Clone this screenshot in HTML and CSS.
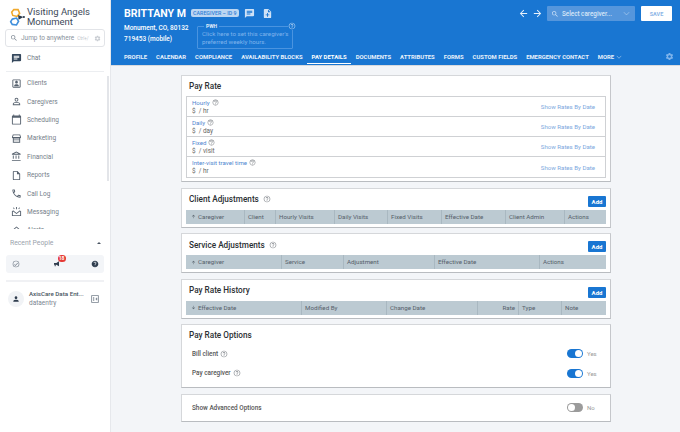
FILE: index.html
```html
<!DOCTYPE html>
<html lang="en">
<head>
  <meta charset="UTF-8" />
  <title>Caregiver Pay Details</title>
  <link rel="stylesheet" href="styles.css">
</head>
<body>
  <svg class="icon-defs" xmlns="http://www.w3.org/2000/svg">
    <symbol id="i-help" viewBox="0 0 24 24"><path d="M11 18h2v-2h-2v2zm1-16C6.48 2 2 6.48 2 12s4.48 10 10 10 10-4.48 10-10S17.52 2 12 2zm0 18c-4.41 0-8-3.59-8-8s3.59-8 8-8 8 3.59 8 8-3.59 8-8 8zm0-14c-2.21 0-4 1.79-4 4h2c0-1.1.9-2 2-2s2 .9 2 2c0 2-3 1.75-3 5h2c0-2.25 3-2.5 3-5 0-2.21-1.79-4-4-4z"/></symbol>
    <symbol id="i-chat" viewBox="0 0 24 24"><path d="M20 2H4c-1.1 0-2 .9-2 2v18l4-4h14c1.1 0 2-.9 2-2V4c0-1.1-.9-2-2-2zM6 9h12v2H6V9zm8 5H6v-2h8v2zm4-6H6V6h12v2z"/></symbol>
    <symbol id="i-note" viewBox="0 0 24 24"><path d="M14 2H6c-1.1 0-1.99.9-1.99 2L4 20c0 1.1.89 2 1.99 2H18c1.1 0 2-.9 2-2V8l-6-6zm2 14h-3v3h-2v-3H8v-2h3v-3h2v3h3v2zm-3-7V3.5L18.5 9H13z"/></symbol>
    <symbol id="i-client" viewBox="0 0 24 24"><path d="M3 5v14c0 1.1.89 2 2 2h14c1.1 0 2-.9 2-2V5c0-1.1-.9-2-2-2H5c-1.11 0-2 .9-2 2zm2 0h14v14H5V5zm10 4c0 1.66-1.34 3-3 3S9 10.66 9 9s1.34-3 3-3 3 1.34 3 3zm-8 7.5c0-1.7 3.3-2.6 5-2.6s5 .9 5 2.6V18H7v-1.5z"/></symbol>
    <symbol id="i-person-line" viewBox="0 0 24 24"><path d="M12 5.9c1.16 0 2.1.94 2.1 2.1s-.94 2.1-2.1 2.1S9.9 9.16 9.9 8s.94-2.1 2.1-2.1m0 9c2.97 0 6.1 1.46 6.1 2.1v1.1H5.9V17c0-.64 3.13-2.1 6.1-2.1M12 4C9.79 4 8 5.79 8 8s1.79 4 4 4 4-1.79 4-4-1.79-4-4-4zm0 9c-2.67 0-8 1.34-8 4v3h16v-3c0-2.66-5.33-4-8-4z"/></symbol>
    <symbol id="i-calendar" viewBox="0 0 24 24"><path d="M20 3h-1V1h-2v2H7V1H5v2H4c-1.1 0-2 .9-2 2v16c0 1.1.9 2 2 2h16c1.1 0 2-.9 2-2V5c0-1.1-.9-2-2-2zm0 18H4V8h16v13z"/></symbol>
    <symbol id="i-store" viewBox="0 0 24 24"><path d="M4 3h16l2 6c0 1.3-.8 2.3-2 2.7V21H4v-9.3C2.8 11.3 2 10.3 2 9l2-6zm1.5 2L4.2 8.8h15.6L18.5 5h-13zM6 12v2h12v-2H6zm0 4v3h12v-3H6z"/></symbol>
    <symbol id="i-bank" viewBox="0 0 24 24"><path d="M4 10h2v7H4v-7zm6 0h2v7h-2v-7zM2 20h19v2H2v-2zm14-10h2v7h-2v-7zM11.5 1 2 6v2h19V6l-9.5-5zm0 2.300L16.500 6h-10l5-2.700z"/></symbol>
    <symbol id="i-doc" viewBox="0 0 24 24"><path d="M14 2H6c-1.1 0-1.99.9-1.99 2L4 20c0 1.1.89 2 1.99 2H18c1.1 0 2-.9 2-2V8l-6-6zm4 18H6V4h7v5h5v11z"/></symbol>
    <symbol id="i-phone" viewBox="0 0 24 24"><path d="M6.54 5c.06.89.21 1.76.45 2.59l-1.2 1.2c-.41-1.2-.67-2.47-.76-3.79h1.51m9.86 12.02c.85.24 1.72.39 2.6.45v1.49c-1.32-.09-2.59-.35-3.8-.75l1.2-1.19M7.5 3H4c-.55 0-1 .45-1 1 0 9.39 7.61 17 17 17 .55 0 1-.45 1-1v-3.49c0-.55-.45-1-1-1-1.24 0-2.45-.2-3.57-.57-.1-.04-.21-.05-.31-.05-.26 0-.51.1-.71.29l-2.2 2.2c-2.83-1.45-5.15-3.76-6.59-6.59l2.2-2.2c.28-.28.36-.67.25-1.02C8.7 6.45 8.5 5.25 8.5 4c0-.55-.45-1-1-1z"/></symbol>
    <symbol id="i-message" viewBox="0 0 24 24"><path d="M2 11h2v9h16v-9h2v11H2V11zm2.5-1.500L12 15l7.500-5.500 1.200 1.600L12 17.500 3.300 11.100l1.200-1.600zM6 3l2 3-1.600 1-2-3L6 3zm12 0 1.600 1-2 3L16 6l2-3zM11 2h2v5h-2V2z"/></symbol>
    <symbol id="i-alert" viewBox="0 0 24 24"><path d="M12 3 2 12h3v9h5v-6h4v6h5v-9h3L12 3zm0 2.700 5 4.500V19h-1v-6H8v6H7v-8.800l5-4.500z"/></symbol>
    <symbol id="i-search" viewBox="0 0 24 24"><path d="M15.5 14h-.79l-.28-.27C15.41 12.59 16 11.11 16 9.5 16 5.91 13.09 3 9.5 3S3 5.91 3 9.5 5.91 16 9.5 16c1.61 0 3.09-.59 4.23-1.57l.27.28v.79l5 4.99L20.49 19l-4.99-5zm-6 0C7.01 14 5 11.99 5 9.5S7.01 5 9.5 5 14 7.01 14 9.5 11.99 14 9.5 14z"/></symbol>
    <symbol id="i-gear" viewBox="0 0 24 24"><path d="M19.14 12.94c.04-.3.06-.61.06-.94 0-.32-.02-.64-.07-.94l2.03-1.58c.18-.14.23-.41.12-.61l-1.92-3.32c-.12-.22-.37-.29-.59-.22l-2.39.96c-.5-.38-1.03-.7-1.62-.94l-.36-2.54c-.04-.24-.24-.41-.48-.41h-3.84c-.24 0-.43.17-.47.41l-.36 2.54c-.59.24-1.13.57-1.62.94l-2.39-.96c-.22-.08-.47 0-.59.22L2.74 8.87c-.12.21-.08.47.12.61l2.03 1.58c-.05.3-.09.63-.09.94s.02.64.07.94l-2.03 1.58c-.18.14-.23.41-.12.61l1.92 3.32c.12.22.37.29.59.22l2.39-.96c.5.38 1.03.7 1.62.94l.36 2.54c.05.24.24.41.48.41h3.84c.24 0 .44-.17.47-.41l.36-2.54c.59-.24 1.13-.56 1.62-.94l2.39.96c.22.08.47 0 .59-.22l1.92-3.32c.12-.22.07-.47-.12-.61l-2.01-1.58zM12 15.6c-1.98 0-3.6-1.62-3.6-3.6s1.62-3.6 3.6-3.6 3.6 1.62 3.6 3.6-1.62 3.6-3.6 3.6z"/></symbol>
    <symbol id="i-back" viewBox="0 0 24 24"><path d="M20 11H7.83l5.59-5.59L12 4l-8 8 8 8 1.41-1.41L7.83 13H20v-2z"/></symbol>
    <symbol id="i-forward" viewBox="0 0 24 24"><path d="M12 4l-1.41 1.41L16.17 11H4v2h12.17l-5.58 5.59L12 20l8-8z"/></symbol>
    <symbol id="i-chevron" viewBox="0 0 24 24"><path d="M3 7.5 12 17l9-9.500" fill="none" stroke="currentColor" stroke-width="2"/></symbol>
    <symbol id="i-up" viewBox="0 0 24 24"><path d="M4 12l1.410 1.410L11 7.830V20h2V7.830l5.580 5.590L20 12l-8-8-8 8z"/></symbol>
    <symbol id="i-down" viewBox="0 0 24 24"><path d="M20 12l-1.410-1.410L13 16.170V4h-2v12.170l-5.580-5.590L4 12l8 8 8-8z"/></symbol>
    <symbol id="i-check" viewBox="0 0 24 24"><path d="M12 2a10 10 0 1 0 0 20 10 10 0 0 0 0-20zm0 18a8 8 0 1 1 0-16 8 8 0 0 1 0 16zm4.600-11.600L10 15l-2.600-2.600L6 13.800l4 4 8-8-1.400-1.400z"/></symbol>
    <symbol id="i-horn" viewBox="0 0 24 24"><path d="M3 9h7l8-5v15l-8-5H8v5H5v-5H3V9z"/></symbol>
    <symbol id="i-help-fill" viewBox="0 0 24 24"><path d="M12 2C6.48 2 2 6.48 2 12s4.48 10 10 10 10-4.48 10-10S17.52 2 12 2zm1 17h-2v-2h2v2zm2.07-7.750-.9.92C13.450 12.900 13 13.500 13 15h-2v-.5c0-1.100.45-2.100 1.170-2.830l1.240-1.260c.37-.36.59-.86.59-1.410 0-1.100-.9-2-2-2s-2 .9-2 2H8c0-2.210 1.790-4 4-4s4 1.790 4 4c0 .88-.36 1.680-.93 2.250z"/></symbol>
    <symbol id="i-person" viewBox="0 0 24 24"><path d="M12 12c2.210 0 4-1.790 4-4s-1.790-4-4-4-4 1.790-4 4 1.790 4 4 4zm0 2c-2.670 0-8 1.340-8 4v2h16v-2c0-2.660-5.330-4-8-4z"/></symbol>
    <symbol id="i-logout" viewBox="0 0 24 24"><path d="M3 3h18v18H3V3zm2 2v14h14V5H5zm3 2h2v10H8V7zm8.500 1.500L18 10l-2 2 2 2-1.500 1.500L13 12l3.500-3.500z"/></symbol>
  </svg>

  <div class="app">
    <!-- sidebar -->
    <aside class="sidebar">
      <div class="brand">
        <svg class="brand-logo" viewBox="0 0 30 34" xmlns="http://www.w3.org/2000/svg">
          <path d="M9 3 17 3 20 10 15 16 7 14 5 8Z" fill="none" stroke="#f0a92d" stroke-width="3"/>
          <path d="M6 21 14 19 18 25 14 32 6 31 3 26Z" fill="none" stroke="#3f8fdc" stroke-width="3"/>
          <path d="M17 13 27 17 18 22Z" fill="#2a3a4d"/>
          <circle cx="28" cy="17" r="2" fill="#2a3a4d"/>
        </svg>
        <div class="brand-name">Visiting Angels Monument</div>
      </div>
      <div class="jump">
        <svg class="jump-icon"><use href="#i-search"/></svg>
        <span class="jump-text">Jump to anywhere</span>
        <span class="jump-key">Ctrl+/</span>
        <svg class="jump-gear"><use href="#i-gear"/></svg>
      </div>
      <div class="nav-item nav-chat"><svg class="nav-icon dark"><use href="#i-chat"/></svg>Chat</div>
      <div class="nav-rule"></div>
      <nav class="nav">
        <div class="nav-item"><svg class="nav-icon"><use href="#i-client"/></svg>Clients</div>
        <div class="nav-item"><svg class="nav-icon"><use href="#i-person-line"/></svg>Caregivers</div>
        <div class="nav-item"><svg class="nav-icon"><use href="#i-calendar"/></svg>Scheduling</div>
        <div class="nav-item"><svg class="nav-icon"><use href="#i-store"/></svg>Marketing</div>
        <div class="nav-item"><svg class="nav-icon"><use href="#i-bank"/></svg>Financial</div>
        <div class="nav-item"><svg class="nav-icon"><use href="#i-doc"/></svg>Reports</div>
        <div class="nav-item"><svg class="nav-icon"><use href="#i-phone"/></svg>Call Log</div>
        <div class="nav-item"><svg class="nav-icon"><use href="#i-message"/></svg>Messaging</div>
        <div class="nav-item"><svg class="nav-icon"><use href="#i-alert"/></svg>Alerts</div>
        <div class="nav-scroll"></div>
      </nav>
      <div class="recent">
        <span>Recent People</span>
        <span class="recent-caret"></span>
      </div>
      <div class="quick">
        <svg class="quick-icon grey"><use href="#i-check"/></svg>
        <span class="quick-horn">
          <svg class="quick-icon"><use href="#i-horn"/></svg>
          <span class="quick-badge">18</span>
        </span>
        <svg class="quick-icon"><use href="#i-help-fill"/></svg>
      </div>
      <div class="side-rule"></div>
      <div class="user">
        <span class="user-avatar"><svg class="user-icon"><use href="#i-person"/></svg></span>
        <div class="user-text">
          <div class="user-name">AxisCare Data Ent...</div>
          <div class="user-login">dataentry</div>
        </div>
        <svg class="user-logout"><use href="#i-logout"/></svg>
      </div>
    </aside>

    <div class="content">
      <!-- header -->
      <header class="header">
        <div class="head-top">
          <div class="head-info">
            <div class="name-row">
              <h1 class="person-name">BRITTANY M</h1>
              <span class="role-badge">CAREGIVER – ID 9</span>
              <svg class="head-icon"><use href="#i-chat"/></svg>
              <svg class="head-icon"><use href="#i-note"/></svg>
            </div>
            <div class="detail-row">
              <div class="address">
                <div>Monument, CO, 80132</div>
                <div>719453 (mobile)</div>
              </div>
              <div class="pwh">
                <span class="pwh-label">PWH</span>
                <svg class="pwh-help"><use href="#i-help"/></svg>
                Click here to set this caregiver's preferred weekly hours.
              </div>
            </div>
          </div>
          <div class="head-actions">
            <svg class="arrow"><use href="#i-back"/></svg>
            <svg class="arrow"><use href="#i-forward"/></svg>
            <div class="picker">
              <svg class="picker-search"><use href="#i-search"/></svg>
              <span class="picker-text">Select caregiver...</span>
              <svg class="picker-chevron"><use href="#i-chevron"/></svg>
            </div>
            <button class="save-btn">SAVE</button>
          </div>
        </div>
        <div class="tabs">
          <a class="tab">Profile</a>
          <a class="tab">Calendar</a>
          <a class="tab">Compliance</a>
          <a class="tab">Availability Blocks</a>
          <a class="tab active">Pay Details</a>
          <a class="tab">Documents</a>
          <a class="tab">Attributes</a>
          <a class="tab">Forms</a>
          <a class="tab">Custom Fields</a>
          <a class="tab">Emergency Contact</a>
          <a class="tab">More <svg class="tab-chevron"><use href="#i-chevron"/></svg></a>
          <svg class="tabs-gear"><use href="#i-gear"/></svg>
        </div>
      </header>

      <!-- cards -->
      <main class="main">
        <section class="card card-rates">
          <h2 class="card-title">Pay Rate</h2>
          <div class="rates">
            <div class="rate-row">
              <div><div class="rate-name">Hourly <svg class="help"><use href="#i-help"/></svg></div><div class="rate-value">$&nbsp; / hr</div></div>
              <a class="rate-link">Show Rates By Date</a>
            </div>
            <div class="rate-row">
              <div><div class="rate-name">Daily <svg class="help"><use href="#i-help"/></svg></div><div class="rate-value">$&nbsp; / day</div></div>
              <a class="rate-link">Show Rates By Date</a>
            </div>
            <div class="rate-row">
              <div><div class="rate-name">Fixed <svg class="help"><use href="#i-help"/></svg></div><div class="rate-value">$&nbsp; / visit</div></div>
              <a class="rate-link">Show Rates By Date</a>
            </div>
            <div class="rate-row">
              <div><div class="rate-name">Inter-visit travel time <svg class="help"><use href="#i-help"/></svg></div><div class="rate-value">$&nbsp; / hr</div></div>
              <a class="rate-link">Show Rates By Date</a>
            </div>
          </div>
        </section>

        <section class="card card-table">
          <div class="table-head">
            <h2 class="card-title">Client Adjustments <svg class="title-help"><use href="#i-help"/></svg></h2>
            <button class="add-btn">Add</button>
          </div>
          <div class="grid-head cols-client">
            <span><svg class="sort"><use href="#i-up"/></svg>Caregiver</span><span>Client</span><span>Hourly Visits</span><span>Daily Visits</span><span>Fixed Visits</span><span>Effective Date</span><span>Client Admin</span><span>Actions</span>
          </div>
        </section>

        <section class="card card-table">
          <div class="table-head">
            <h2 class="card-title">Service Adjustments <svg class="title-help"><use href="#i-help"/></svg></h2>
            <button class="add-btn">Add</button>
          </div>
          <div class="grid-head cols-service">
            <span><svg class="sort"><use href="#i-up"/></svg>Caregiver</span><span>Service</span><span>Adjustment</span><span>Effective Date</span><span>Actions</span>
          </div>
        </section>

        <section class="card card-table">
          <div class="table-head">
            <h2 class="card-title">Pay Rate History</h2>
            <button class="add-btn">Add</button>
          </div>
          <div class="grid-head cols-history">
            <span><svg class="sort"><use href="#i-down"/></svg>Effective Date</span><span>Modified By</span><span>Change Date</span><span class="right">Rate</span><span>Type</span><span>Note</span>
          </div>
        </section>

        <section class="card card-options">
          <h2 class="card-title">Pay Rate Options</h2>
          <div class="option-row">
            <span class="option-label">Bill client <svg class="help"><use href="#i-help"/></svg></span>
            <span class="toggle on"></span><span class="toggle-text">Yes</span>
          </div>
          <div class="option-row">
            <span class="option-label">Pay caregiver <svg class="help"><use href="#i-help"/></svg></span>
            <span class="toggle on"></span><span class="toggle-text">Yes</span>
          </div>
        </section>

        <section class="card card-advanced">
          <div class="option-row">
            <span class="option-label">Show Advanced Options</span>
            <span class="toggle"></span><span class="toggle-text">No</span>
          </div>
        </section>
      </main>
    </div>
  </div>
</body>
</html>
```

FILE: styles.css
```css
html, body {
  margin: 0;
  padding: 0;
  height: 100%;
  overflow: hidden;
}
body {
  font-family: Roboto, "Liberation Sans", sans-serif;
  color: #333;
  background: #f3f5f8;
}
h1, h2 {
  margin: 0;
}
.icon-defs {
  display: none;
}
.app {
  display: flex;
  height: 432px;
}

/* ======================
   sidebar
   ====================== */
.sidebar {
  width: 110px;
  flex: 0 0 auto;
  background: #fff;
  border-right: 1px solid #e6e8ec;
  display: flex;
  flex-direction: column;
}
.brand {
  display: flex;
  align-items: center;
  height: 29px;
  padding: 4px 0 0 9px;
  box-sizing: border-box;
}
.brand-logo {
  width: 16px;
  height: 18px;
  margin-right: 2px;
}
.brand-name {
  font-size: 9.5px;
  line-height: 9.5px;
  width: 75px;
  color: #3e4a59;
}
.jump {
  display: flex;
  align-items: center;
  margin: 0 5px;
  height: 18px;
  border: 1px solid #e2e4e8;
  border-radius: 3px;
  box-sizing: border-box;
  padding: 0 3px 0 4px;
}
.jump-icon {
  width: 8px;
  height: 8px;
  fill: #7c8692;
  margin-right: 3px;
}
.jump-text {
  font-size: 6.5px;
  color: #8a929c;
  white-space: nowrap;
}
.jump-key {
  font-size: 4.5px;
  color: #c2c6cc;
  margin-left: 3px;
  white-space: nowrap;
}
.jump-gear {
  width: 7px;
  height: 7px;
  fill: #c8ccd2;
  margin-left: auto;
}
.nav-item {
  display: flex;
  align-items: center;
  height: 18.4px;
  padding-left: 11px;
  font-size: 6.5px;
  color: #757e89;
  flex: 0 0 auto;
}
.nav-chat {
  margin-top: 1px;
  height: 20px;
}
.nav-icon {
  width: 11px;
  height: 11px;
  fill: #56616e;
  margin-right: 5px;
  flex: 0 0 auto;
}
.nav-icon.dark {
  fill: #34475c;
}
.nav-rule {
  height: 1px;
  background: #eceef1;
  margin: 3px 6px 2px;
}
.nav {
  position: relative;
  height: 155px;
  overflow: hidden;
}
.nav-scroll {
  position: absolute;
  left: 107px;
  top: 2px;
  width: 2px;
  height: 105px;
  background: #e3e5e9;
}
.recent {
  display: flex;
  justify-content: space-between;
  align-items: center;
  padding: 8px 9px 0 10px;
  font-size: 6.8px;
  color: #9aa2ac;
  height: 19px;
  box-sizing: border-box;
}
.recent-caret {
  width: 0;
  height: 0;
  border-left: 2.5px solid transparent;
  border-right: 2.5px solid transparent;
  border-bottom: 2.5px solid #4a5562;
}
.quick {
  display: flex;
  justify-content: space-between;
  align-items: center;
  margin: 7px 6px 0;
  height: 18px;
  padding: 0 5px 0 6px;
  background: #f3f5f8;
  border-radius: 3px;
}
.quick-icon {
  width: 8px;
  height: 8px;
  fill: #2f3d4e;
  display: block;
}
.quick-icon.grey {
  fill: #77818d;
}
.quick-horn {
  position: relative;
  margin-left: 2px;
}
.quick-badge {
  position: absolute;
  left: 5px;
  top: -5px;
  width: 8px;
  height: 7px;
  border-radius: 4px;
  background: #e53935;
  color: #fff;
  font-size: 5px;
  font-weight: 700;
  line-height: 7px;
  text-align: center;
}
.side-rule {
  height: 2px;
  background: #f0f1f4;
  margin: 7px 6px 0;
}
.user {
  display: flex;
  align-items: center;
  padding: 8px 10px 0 8px;
}
.user-avatar {
  width: 16px;
  height: 16px;
  border-radius: 50%;
  background: #f1f3f6;
  display: flex;
  align-items: center;
  justify-content: center;
  flex: 0 0 auto;
  margin-right: 5px;
}
.user-icon {
  width: 8px;
  height: 8px;
  fill: #2f3d4e;
}
.user-text {
  flex: 1;
  min-width: 0;
}
.user-name {
  font-size: 6.2px;
  font-weight: 500;
  color: #4a5562;
  white-space: nowrap;
  line-height: 9px;
}
.user-login {
  font-size: 6.5px;
  color: #7c8692;
  line-height: 9px;
}
.user-logout {
  width: 10px;
  height: 10px;
  fill: #77818d;
  flex: 0 0 auto;
}

/* ======================
   header
   ====================== */
.content {
  flex: 1;
  min-width: 0;
  display: flex;
  flex-direction: column;
}
.header {
  height: 66px;
  background: #1976d2;
  color: #fff;
  box-sizing: border-box;
  border-bottom: 1px solid #d8dade;
  flex: 0 0 auto;
}
.head-top {
  display: flex;
  justify-content: space-between;
  height: 50px;
  padding: 6px 8px 0 13px;
  box-sizing: border-box;
}
.name-row {
  display: flex;
  align-items: center;
  height: 14px;
}
.person-name {
  font-size: 10.6px;
  font-weight: 700;
  margin-right: 5px;
  white-space: nowrap;
}
.role-badge {
  background: #bcd6f2;
  color: #2f7ed6;
  font-size: 5.3px;
  font-weight: 500;
  line-height: 8px;
  padding: 0 2px;
  border-radius: 2px;
  white-space: nowrap;
  margin-right: 5px;
}
.head-icon {
  width: 11px;
  height: 11px;
  fill: #cfe2f7;
  margin-right: 7px;
}
.detail-row {
  display: flex;
}
.address {
  width: 73px;
  font-size: 6.5px;
  font-weight: 500;
  line-height: 11px;
  padding-top: 3px;
  white-space: nowrap;
}
.pwh {
  position: relative;
  width: 96px;
  height: 23px;
  box-sizing: border-box;
  margin-top: 6px;
  border: 1px solid #4a94e0;
  border-radius: 1px;
  padding: 3px 2px 0 4px;
  font-size: 6.2px;
  line-height: 8.3px;
  color: #7fb4ec;
}
.pwh-label {
  position: absolute;
  left: 6px;
  top: -4px;
  background: #1976d2;
  padding: 0 2px;
  font-size: 5px;
  font-weight: 700;
  line-height: 6px;
  color: #e3effb;
}
.pwh-help {
  position: absolute;
  right: -4px;
  top: -5px;
  width: 8px;
  height: 8px;
  fill: #a9cdf2;
  background: #1976d2;
  border-radius: 50%;
}
.head-actions {
  display: flex;
  align-items: flex-start;
  height: 15px;
}
.arrow {
  width: 11px;
  height: 11px;
  fill: #e8f1fb;
  margin: 2px 3px 0 0;
}
.picker {
  display: flex;
  align-items: center;
  width: 88px;
  height: 15px;
  margin-left: 1px;
  padding: 0 4px;
  box-sizing: border-box;
  background: #5596dc;
  border-radius: 1px;
}
.picker-search {
  width: 8px;
  height: 8px;
  fill: #cfe2f7;
  margin-right: 3px;
}
.picker-text {
  font-size: 6.3px;
  font-weight: 500;
  color: #d9e8f8;
  white-space: nowrap;
}
.picker-chevron {
  width: 7px;
  height: 7px;
  margin-left: auto;
  margin-right: 1px;
  color: #bcd6f2;
}
.save-btn {
  width: 31px;
  height: 15px;
  margin-left: 6px;
  padding: 0;
  border: none;
  border-radius: 1px;
  background: #fff;
  color: #8cb5e6;
  font-family: inherit;
  font-size: 5.5px;
  font-weight: 700;
}
.tabs {
  display: flex;
  align-items: flex-start;
  padding-left: 8.5px;
  height: 15px;
}
.tab {
  font-size: 5.9px;
  font-weight: 700;
  text-transform: uppercase;
  height: 13px;
  padding: 0 4.5px;
  color: #e8f1fb;
  white-space: nowrap;
  display: flex;
  align-items: center;
}
.tab.active {
  border-bottom: 1px solid #fff;
  color: #fff;
}
.tab-chevron {
  width: 6px;
  height: 6px;
  margin-left: 2px;
  color: #cfe2f7;
}
.tabs-gear {
  width: 9px;
  height: 9px;
  fill: #7fb4ec;
  margin: 2px 6px 0 auto;
}

/* ======================
   cards
   ====================== */
.main {
  flex: 1;
  padding: 9px 0 0 70px;
  display: flex;
  flex-direction: column;
  gap: 5.5px;
  overflow: hidden;
}
.card {
  width: 430px;
  flex: 0 0 auto;
  box-sizing: border-box;
  background: #fff;
  border: 1px solid #d5d7da;
  border-bottom: 1px solid #b9bcc0;
  border-right: 1px solid #c5c7cb;
  padding: 0 4px;
}
.card-title {
  font-size: 8.2px;
  font-weight: 500;
  color: #2b2f33;
  display: flex;
  align-items: center;
  gap: 4px;
}
.card-rates {
  height: 107px;
}
.card-rates .card-title {
  padding: 0 3px;
  height: 20px;
}
.rates {
  border: 1px solid #cfd1d4;
}
.rate-row {
  display: flex;
  justify-content: space-between;
  align-items: center;
  height: 20px;
  box-sizing: border-box;
  border-bottom: 1px solid #cfd1d4;
  padding: 0 10px 0 5px;
}
.rate-row:last-child {
  border-bottom: none;
}
.rate-name {
  font-size: 6.1px;
  line-height: 9px;
  color: #4f86cf;
  display: flex;
  align-items: center;
  gap: 2px;
}
.rate-value {
  font-size: 6.4px;
  line-height: 9px;
  color: #666;
}
.rate-link {
  font-size: 6.1px;
  color: #7da7de;
}
.help {
  width: 7px;
  height: 7px;
  fill: #8b8f94;
  flex: 0 0 auto;
}
.title-help {
  width: 8px;
  height: 8px;
  fill: #8b8f94;
}
.card-table {
  height: 40px;
}
.table-head {
  display: flex;
  justify-content: space-between;
  align-items: center;
  height: 21px;
  padding: 0 0 0 3px;
}
.add-btn {
  width: 18px;
  height: 11px;
  padding: 0;
  margin-top: 4px;
  border: none;
  border-radius: 1px;
  background: #1976d2;
  color: #fff;
  font-family: inherit;
  font-size: 6px;
  font-weight: 700;
}
.grid-head {
  display: grid;
  height: 14px;
  background: #bccad2;
  font-size: 6.2px;
  color: #55606a;
  align-items: stretch;
}
.grid-head span {
  display: flex;
  align-items: center;
  padding-left: 3px;
  border-right: 1px solid #a9b8c1;
  white-space: nowrap;
  overflow: hidden;
}
.grid-head span:first-child {
  padding-left: 5px;
}
.grid-head span:last-child {
  border-right: none;
}
.grid-head span.right {
  justify-content: flex-end;
  padding: 0 3px 0 0;
}
.sort {
  width: 5px;
  height: 5px;
  fill: #55606a;
  margin-right: 2px;
  flex: 0 0 auto;
}
.cols-client {
  grid-template-columns: 59px 31px 59px 53px 54px 64px 59px 1fr;
}
.cols-service {
  grid-template-columns: 96px 62px 91px 105px 1fr;
}
.cols-history {
  grid-template-columns: 116px 85px 91px 41px 43px 1fr;
}
.card-options {
  height: 64px;
}
.card-options .card-title {
  padding: 0 3px;
  height: 19px;
}
.option-row {
  display: flex;
  align-items: center;
  height: 19.5px;
  padding-left: 6px;
}
.option-label {
  font-size: 6.4px;
  font-weight: 500;
  color: #555;
  display: flex;
  align-items: center;
  gap: 2px;
}
.option-label .help {
  width: 8px;
  height: 8px;
}
.toggle {
  position: relative;
  width: 16px;
  height: 9px;
  border-radius: 5px;
  background: #9b9b9b;
  margin-left: auto;
}
.toggle::after {
  content: "";
  position: absolute;
  top: 1px;
  left: 1px;
  width: 7px;
  height: 7px;
  border-radius: 50%;
  background: #fff;
}
.toggle.on {
  background: #1976d2;
}
.toggle.on::after {
  left: 8px;
}
.toggle-text {
  width: 23px;
  padding-left: 4px;
  box-sizing: border-box;
  font-size: 6px;
  color: #999;
}
.card-advanced {
  height: 28px;
  display: flex;
  flex-direction: column;
  justify-content: center;
}
```
